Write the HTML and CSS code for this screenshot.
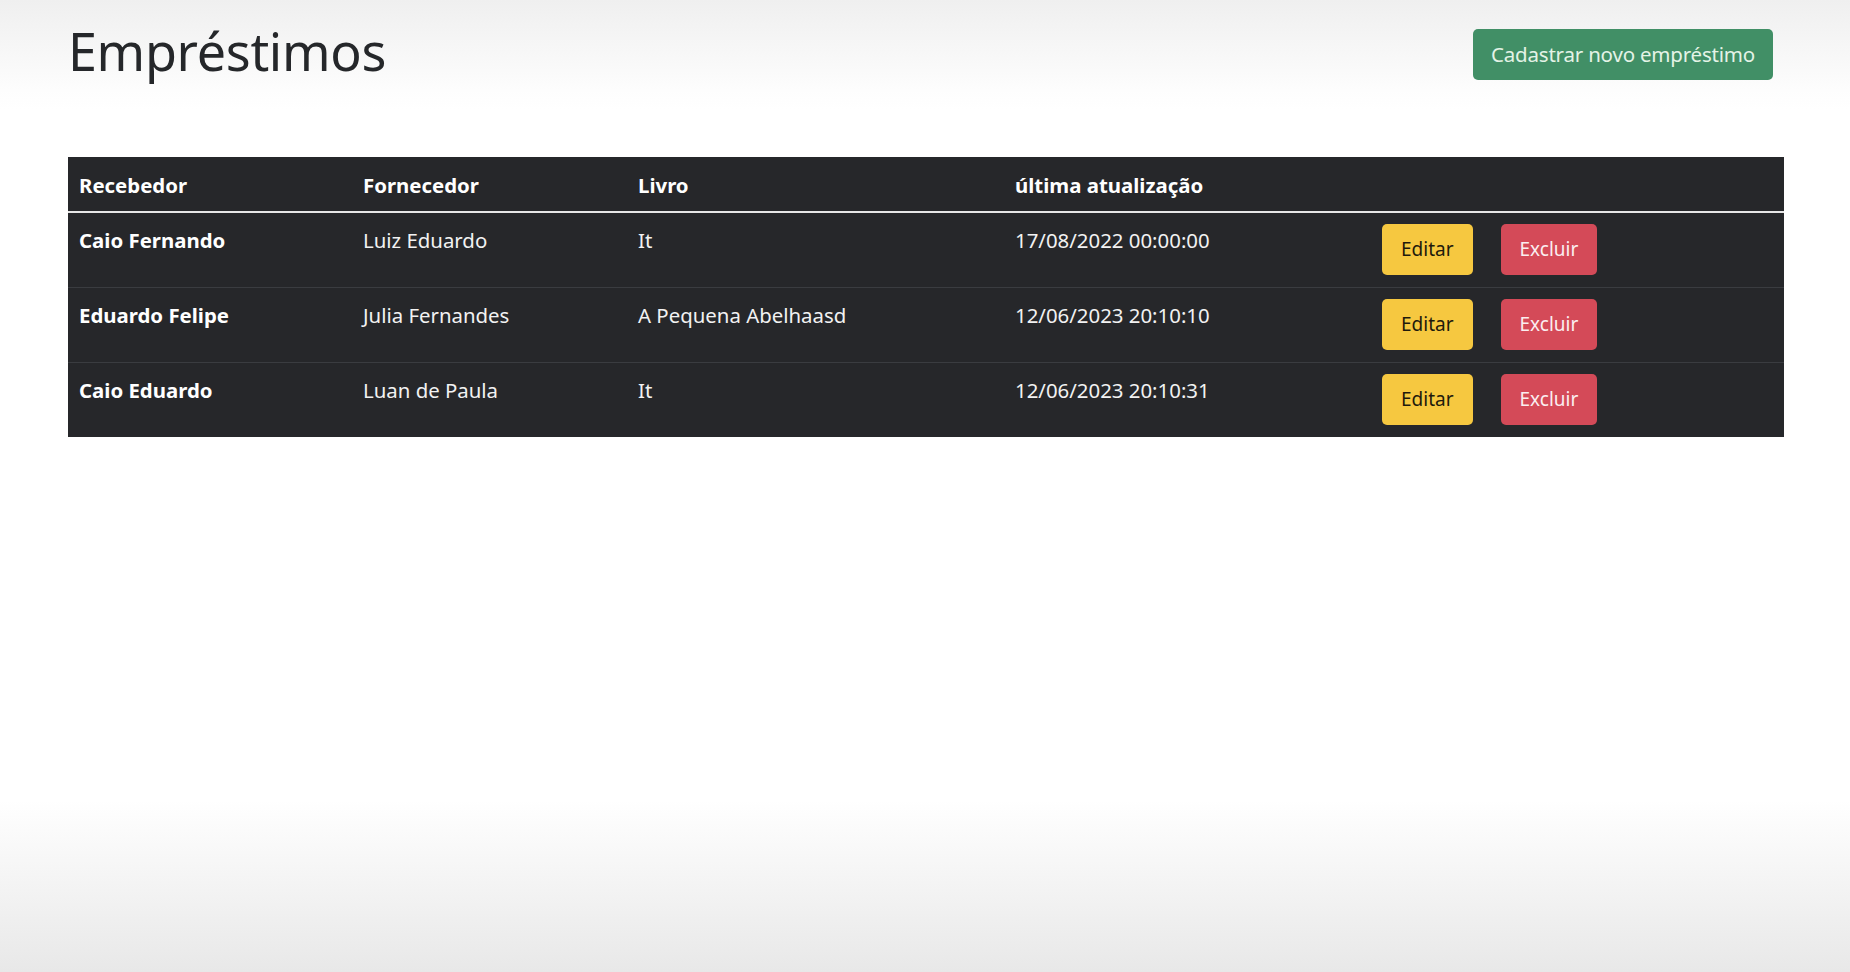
FILE: index.html
```html
<!DOCTYPE html>
<html lang="pt-BR">
<head>
<meta charset="utf-8">
<title>Empréstimos</title>
<link rel="stylesheet" href="styles.css">
</head>
<body>
<div class="page">
  <div class="topbar">
    <h1 class="title">Empréstimos</h1>
    <button class="btn btn-success">Cadastrar novo empréstimo</button>
  </div>
  <table class="table">
    <thead>
      <tr>
        <th class="c1">Recebedor</th>
        <th class="c2">Fornecedor</th>
        <th class="c3">Livro</th>
        <th class="c4">última atualização</th>
        <th class="c5"></th>
      </tr>
    </thead>
    <tbody>
      <tr>
        <th>Caio Fernando</th>
        <td>Luiz Eduardo</td>
        <td>It</td>
        <td>17/08/2022 00:00:00</td>
        <td class="actions"><button class="btn btn-warning">Editar</button><button class="btn btn-danger">Excluir</button></td>
      </tr>
      <tr>
        <th>Eduardo Felipe</th>
        <td>Julia Fernandes</td>
        <td>A Pequena Abelhaasd</td>
        <td>12/06/2023 20:10:10</td>
        <td class="actions"><button class="btn btn-warning">Editar</button><button class="btn btn-danger">Excluir</button></td>
      </tr>
      <tr>
        <th>Caio Eduardo</th>
        <td>Luan de Paula</td>
        <td>It</td>
        <td>12/06/2023 20:10:31</td>
        <td class="actions"><button class="btn btn-warning">Editar</button><button class="btn btn-danger">Excluir</button></td>
      </tr>
    </tbody>
  </table>
</div>
</body>
</html>
```

FILE: styles.css
```css
html, body {
  margin: 0;
  padding: 0;
}
body {
  min-height: 100vh;
  font-family: "Noto Sans", "Open Sans", sans-serif;
  color: #212529;
  background: linear-gradient(to bottom, #efefef 0px, #fdfdfd 90px, #ffffff 110px, #ffffff 800px, #f7f7f7 860px, #e8e8e8 972px);
}
.page {
  padding: 0 66px 0 68px;
}
.topbar {
  display: flex;
  justify-content: space-between;
  align-items: flex-start;
  padding: 29px 11px 0 0;
  height: 51px;
}
.title {
  margin: -4px 0 0 0;
  font-size: 52px;
  font-weight: 400;
  line-height: 51px;
  color: #25272a;
  letter-spacing: -0.3px;
}
.btn {
  font-family: inherit;
  font-size: 19px;
  height: 51px;
  padding: 0 19px;
  border: none;
  border-radius: 5px;
  line-height: 51px;
  cursor: pointer;
}
.btn-success {
  background: #418f66;
  color: #e4f3e6;
  font-size: 20.5px;
  padding: 0 18px;
  letter-spacing: -0.2px;
}
.table {
  margin-top: 77px;
  width: 100%;
  border-collapse: collapse;
  background: #26272a;
  color: #f2f2f2;
  font-size: 20.4px;
}
.table th, .table td {
  text-align: left;
  vertical-align: top;
  padding: 13px 11px 11px;
  line-height: 28px;
}
.table thead th {
  padding: 14px 11px 12px;
}
.table th {
  font-weight: 700;
  color: #ffffff;
}
.table td {
  font-weight: 400;
}
.table thead tr {
  border-bottom: 2px solid #e6e6e6;
}
.table tbody tr + tr {
  border-top: 1px solid #3a3c40;
}
.c1 { width: 262px; }
.c2 { width: 253px; }
.c3 { width: 355px; }
.c4 { width: 345px; }
.table td.actions {
  padding: 11px 11px 12px;
  display: flex;
  gap: 28px;
}
.btn-warning {
  background: #f6c840;
  color: #1e1a0c;
}
.btn-danger {
  background: #d44a58;
  color: #fbeef0;
}
```
